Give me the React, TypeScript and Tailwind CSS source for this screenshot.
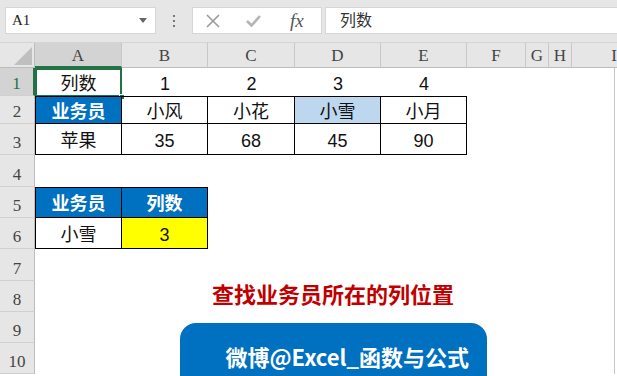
import type { ReactNode } from 'react'

const CJK = 'font-["Liberation_Sans","Noto_Sans_CJK_SC",sans-serif]'
const SERIF = 'font-["Liberation_Serif","Noto_Sans_CJK_SC",serif]'

const COLS = ['A', 'B', 'C', 'D', 'E', 'F', 'G', 'H']

type CellDef = { text?: string; cls?: string }

// body rows 1..10, cells A..H; missing = blank cell
const ROWS: CellDef[][] = [
  [{ text: '列数' }, { text: '1' }, { text: '2' }, { text: '3' }, { text: '4' }],
  [
    { text: '业务员', cls: 'bg-[#0070c0] text-white font-bold border-l border-t border-r border-b border-black' },
    { text: '小风', cls: 'border-t border-r border-b border-black' },
    { text: '小花', cls: 'border-t border-r border-b border-black' },
    { text: '小雪', cls: 'bg-[#bdd7ee] border-t border-r border-b border-black' },
    { text: '小月', cls: 'border-t border-r border-b border-black' },
  ],
  [
    { text: '苹果', cls: 'border-l border-r border-b border-black' },
    { text: '35', cls: 'border-r border-b border-black' },
    { text: '68', cls: 'border-r border-b border-black' },
    { text: '45', cls: 'border-r border-b border-black' },
    { text: '90', cls: 'border-r border-b border-black' },
  ],
  [],
  [
    { text: '业务员', cls: 'bg-[#0070c0] text-white font-bold border-l border-t border-r border-b border-black' },
    { text: '列数', cls: 'bg-[#0070c0] text-white font-bold border-t border-r border-b border-black' },
  ],
  [
    { text: '小雪', cls: 'border-l border-r border-b border-black' },
    { text: '3', cls: 'bg-[#ffff00] border-r border-b border-black' },
  ],
  [],
  [],
  [],
  [],
]

function Toolbar() {
  return (
    <div className="h-[43px] bg-[#e6e6e6] border-b border-[#d4d4d4] flex items-start pt-[7px] pl-[5px]">
      <div className="w-[151px] h-[27px] bg-white border border-[#d6d6d6] flex items-center justify-between pl-[6px] pr-[8px]">
        <span className={`${SERIF} text-[15px] text-[#222]`}>A1</span>
        <svg width="8" height="5" viewBox="0 0 8 5">
          <path d="M0 0 L8 0 L4 5 Z" fill="#666" />
        </svg>
      </div>
      <div className="w-[36px] h-[27px] flex flex-col items-center justify-center gap-[3px]">
        <span className="w-[2px] h-[2px] bg-[#777]" />
        <span className="w-[2px] h-[2px] bg-[#777]" />
        <span className="w-[2px] h-[2px] bg-[#777]" />
      </div>
      <div className="w-[130px] h-[27px] bg-white border border-[#d6d6d6] flex items-center">
        <svg className="ml-[13px]" width="14" height="14" viewBox="0 0 14 14">
          <path d="M1 1 L13 13 M13 1 L1 13" stroke="#9a9a9a" strokeWidth="1.6" />
        </svg>
        <svg className="ml-[26px]" width="15" height="13" viewBox="0 0 15 13">
          <path d="M1 7 L5.5 11.5 L14 2" stroke="#b4b4b4" strokeWidth="2.6" fill="none" />
        </svg>
        <span className={`${SERIF} ml-[29px] italic text-[19px] text-[#555] leading-none`}>fx</span>
      </div>
      <div className="ml-[3px] flex-1 h-[27px] bg-white border border-[#d6d6d6] border-r-0 flex items-center pl-[14px]">
        <span className={`${CJK} text-[16px] text-[#333]`}>列数</span>
      </div>
    </div>
  )
}

function RowHead({ n, active }: { n: number; active?: boolean }) {
  return (
    <div
      className={`${SERIF} flex items-end justify-center pb-[3px] text-[17px] leading-none border-b border-[#d0d0d0] ${
        active
          ? 'bg-[#d3d3d3] text-[#217346] border-r-2 border-r-[#217346]'
          : 'bg-[#e6e6e6] text-[#444] border-r border-r-[#bdbdbd]'
      }`}>
      {n}
    </div>
  )
}

function Cell({ def, children }: { def?: CellDef; children?: ReactNode }) {
  return (
    <div
      className={`relative flex items-center justify-center pt-[3px] text-[18px] leading-none text-[#111] ${CJK} ${
        def?.cls ?? ''
      }`}>
      {def?.text}
      {children}
    </div>
  )
}

function Sheet() {
  return (
    <div className="grid grid-cols-[35px_87px_86px_87px_86px_86px_59px_23px_23px_43px_2px] grid-rows-[25px_28px_28px_31px_32px_31px_31px_32px_31px_31px_31px]">
      {/* corner */}
      <div className="bg-[#e6e6e6] border-r border-b border-[#bdbdbd] flex items-end justify-end pr-[2px] pb-[2px]">
        <svg width="18" height="18" viewBox="0 0 18 18">
          <path d="M18 0 L18 18 L0 18 Z" fill="#bfbfbf" />
        </svg>
      </div>
      {COLS.map((c, i) => (
        <div
          key={c}
          className={`${SERIF} flex items-center justify-center pt-[2px] text-[17px] text-[#444] border-r border-[#c8c8c8] ${
            i === 0 ? 'bg-[#d3d3d3] border-b-2 border-b-[#217346]' : 'bg-[#e6e6e6] border-b border-b-[#bdbdbd]'
          }`}>
          {c}
        </div>
      ))}
      <div className={`${SERIF} col-span-2 flex items-center justify-end pt-[2px] text-[17px] text-[#444] bg-[#e6e6e6] border-b border-[#bdbdbd]`}>
        I
      </div>

      {ROWS.map((row, r) => (
        <RowCells key={r} r={r} row={row} />
      ))}
    </div>
  )
}

function RowCells({ r, row }: { r: number; row: CellDef[] }) {
  const cells = []
  for (let c = 0; c < 8; c++) {
    cells.push(
      <Cell key={c} def={row[c]}>
        {r === 0 && c === 0 && (
          <>
            <div className="absolute inset-0 -bottom-[1px] border-2 border-[#217346]" />
            <div className="absolute -right-[3px] -bottom-[4px] w-[6px] h-[6px] bg-[#217346] border border-white" />
          </>
        )}
      </Cell>,
    )
  }
  return (
    <>
      <RowHead n={r + 1} active={r === 0} />
      {cells}
      <div className="border-r border-[#c6c6c6]" />
      <div />
    </>
  )
}

export default function App() {
  return (
    <div className="relative w-[617px] h-[376px] overflow-hidden bg-white">
      <Toolbar />
      <Sheet />

      {/* floating shapes over the sheet */}
      <div className={`absolute left-[212px] top-[285px] text-[22px] leading-none font-bold text-[#c00000] ${CJK}`}>
        查找业务员所在的列位置
      </div>
      <div className="absolute left-[180px] top-[323px] w-[307px] h-[70px] rounded-[16px] bg-[#0070c0] flex justify-end pr-[18px] pt-[22px]">
        <span className='text-[22px] leading-none font-bold text-white font-["Noto_Sans_CJK_SC",sans-serif]'>
          微博@Excel_函数与公式
        </span>
      </div>
    </div>
  )
}
